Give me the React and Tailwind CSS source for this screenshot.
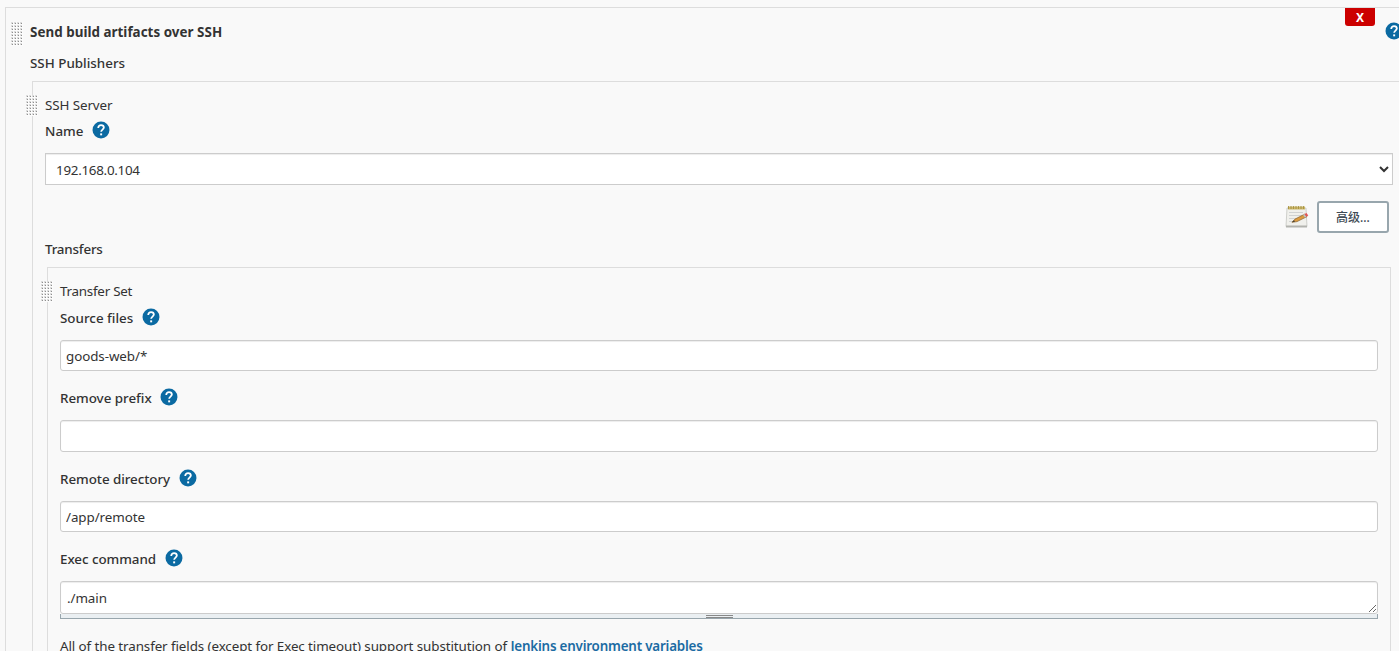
import { useState } from 'react'

const textFields = [
  { key: 'sourceFiles', label: 'Source files', labelClass: 'w-[73px]', boxClass: 'h-[31px]' },
  { key: 'removePrefix', label: 'Remove prefix', labelClass: 'w-[91px] tracking-[-0.03px]', boxClass: 'h-8' },
  { key: 'remoteDirectory', label: 'Remote directory', labelClass: 'w-[110px] tracking-[-0.05px]', boxClass: 'h-[31px]' }
]

function HelpIcon({ className = '' }) {
  return (
    <svg className={`h-[18px] w-[18px] shrink-0 ${className}`} viewBox="0 0 24 24" aria-label="Help">
      <circle cx="12" cy="12" r="11.3" fill="#0b6aa2" />
      <path
        d="M8.3 9.2C8.3 6.9 10 5.4 12.1 5.4s3.7 1.4 3.7 3.4c0 2.5-3.6 3-3.6 5.6"
        fill="none"
        stroke="#fff"
        strokeWidth="2.4"
      />
      <rect x="10.9" y="16.5" width="2.6" height="2.6" fill="#fff" />
    </svg>
  )
}

function DragHandle({ id, rows, className = '' }) {
  return (
    <svg className={`absolute w-3 ${className}`} height={rows * 3} aria-hidden="true">
      <defs>
        <pattern id={id} width="3" height="3" patternUnits="userSpaceOnUse">
          <rect width="3" height="3" fill="#fcfcfc" />
          <rect width="2" height="2" fill="#dcdcdc" />
          <rect x="1" y="1" width="1" height="1" fill="#8f8f8f" />
        </pattern>
      </defs>
      <rect width="12" height="100%" fill={`url(#${id})`} />
    </svg>
  )
}

function NotepadIcon() {
  return (
    <svg className="h-6 w-6" viewBox="0 0 24 24" aria-hidden="true">
      <path d="M2 3h19l1 18.5H1z" fill="#f0f0ec" stroke="#c4c5c0" strokeWidth=".8" />
      <path d="M1 20.5h21v2H1z" fill="#b2b3ae" />
      <path d="M3 1.5h17v3H3z" fill="#cdb86a" />
      <path d="M3.5 1v3M6 1v3M8.5 1v3M11 1v3M13.5 1v3M16 1v3M18.5 1v3" stroke="#a08c3c" strokeWidth=".8" />
      <path d="M4 7.5h14M4 10.5h13M4 13.5h8M4 16.5h5" stroke="#d0d2d2" />
      <path d="M7 17.3l3-3.2L20 9l2 2.6-10 5z" fill="#dc9b3e" stroke="#86602c" strokeWidth=".7" />
      <path d="M7 17.3l2-2 1 1.3z" fill="#333" />
      <path d="M19 9.3l2.5-1.2 1.8 2.4-2.3 1.3z" fill="#e25555" />
      <path d="M18 9.8l1.4-.7 1.9 2.7-1.4.7z" fill="#bfc4c6" />
    </svg>
  )
}

function FieldLabel({ children, className = '' }) {
  return (
    <div className="flex h-[18px] items-center">
      <span className={`whitespace-nowrap font-medium ${className}`}>{children}</span>
      <HelpIcon className="relative -top-px ml-[9px]" />
    </div>
  )
}

export default function App() {
  const [values, setValues] = useState({
    sourceFiles: 'goods-web/*',
    removePrefix: '',
    remoteDirectory: '/app/remote'
  })
  const [command, setCommand] = useState('./main')

  return (
    <div className="h-[651px] w-[1399px] overflow-hidden bg-[#f9f9f9] pl-[5px] pt-[7px] font-['Noto_Sans','Noto_Sans_CJK_SC',sans-serif] text-[13.4px] leading-[18px] text-[#333]">
      <section className="relative h-[700px] border-l border-t border-[#ddd]">
        <DragHandle id="grip-publisher" rows={8} className="left-[5px] top-[14px]" />
        <button className="absolute right-6 top-0 h-[18px] w-[30px] rounded-b-[3px] bg-[#c00] pt-px text-[12px] font-bold leading-[17px] text-white">
          X
        </button>
        <HelpIcon className="absolute -right-1 top-[14px]" />

        <h2 className="ml-6 pt-[15px] font-bold tracking-[0.03px]">Send build artifacts over SSH</h2>
        <div className="ml-6 mt-[13px] font-medium">SSH Publishers</div>

        {/* SSH server */}
        <div className="relative ml-[26px] mt-[9px] h-[650px] border-l border-t border-[#ddd]">
          <DragHandle id="grip-server" rows={7} className="-left-[7px] top-[13px]" />
          <div className="pl-3 pt-[14px]">
            <div className="mb-2 tracking-[-0.1px]">SSH Server</div>
            <FieldLabel className="w-[38px]">Name</FieldLabel>
            <select className="mt-[13px] block h-8 w-[1348px] border border-[#ccc] bg-white pl-[6px] pr-px pt-[2px] tracking-[-0.28px] shadow-[inset_0_1px_1px_rgba(0,0,0,0.075)]">
              <option>192.168.0.104</option>
            </select>
            <div className="mr-2.5 mt-4 flex h-8 items-center justify-end gap-2">
              <NotepadIcon />
              <button className="h-8 w-[72px] rounded-[3px] border-2 border-[#98a6ad] bg-white pt-[2px] text-[12px] font-medium text-[#404b55]">
                高级...
              </button>
            </div>
            <div className="mt-[7px] font-medium tracking-[-0.2px]">Transfers</div>
          </div>

          {/* Transfer set */}
          <div className="relative ml-[14px] mt-[9px] h-[460px] w-[1344px] border border-[#ddd]">
            <DragHandle id="grip-transfer" rows={7} className="-left-[7px] top-[13px]" />
            <div className="px-3 pt-[14px]">
              <div className="mb-[9px] tracking-[-0.25px]">Transfer Set</div>
              {textFields.map((field) => (
                <div key={field.key} className="mb-[18px]">
                  <FieldLabel className={field.labelClass}>{field.label}</FieldLabel>
                  <input
                    type="text"
                    aria-label={field.label}
                    className={`mt-[13px] block w-[1318px] rounded-[3px] border border-[#ccc] bg-white px-[5px] tracking-[-0.08px] shadow-[inset_0_1px_1px_rgba(0,0,0,0.075)] ${field.boxClass}`}
                    value={values[field.key]}
                    onChange={(e) => setValues({ ...values, [field.key]: e.target.value })}
                  />
                </div>
              ))}
              <FieldLabel className="w-[96px] tracking-[-0.05px]">Exec command</FieldLabel>
              <textarea
                aria-label="Exec command"
                className="mt-[13px] block h-[33px] w-[1318px] overflow-hidden rounded-[3px] border border-[#ccc] bg-white px-[6px] pt-[7px] tracking-[-0.08px] shadow-[inset_0_1px_1px_rgba(0,0,0,0.075)]"
                value={command}
                onChange={(e) => setCommand(e.target.value)}
              />
              <div className="flex h-[5px] w-[1318px] items-start justify-center border border-t-0 border-[#98a6ad] bg-[#eaeff2]">
                <div className="mt-px h-[3px] w-[27px] border-y border-[#888]" />
              </div>
              <p className="mt-[18px] whitespace-nowrap tracking-[-0.09px]">
                All of the transfer fields (except for Exec timeout) support substitution of{' '}
                <a className="font-semibold tracking-[-0.2px] text-[#1b6ba3]" href="#">Jenkins environment variables</a>
              </p>
            </div>
          </div>
        </div>
      </section>
    </div>
  )
}
